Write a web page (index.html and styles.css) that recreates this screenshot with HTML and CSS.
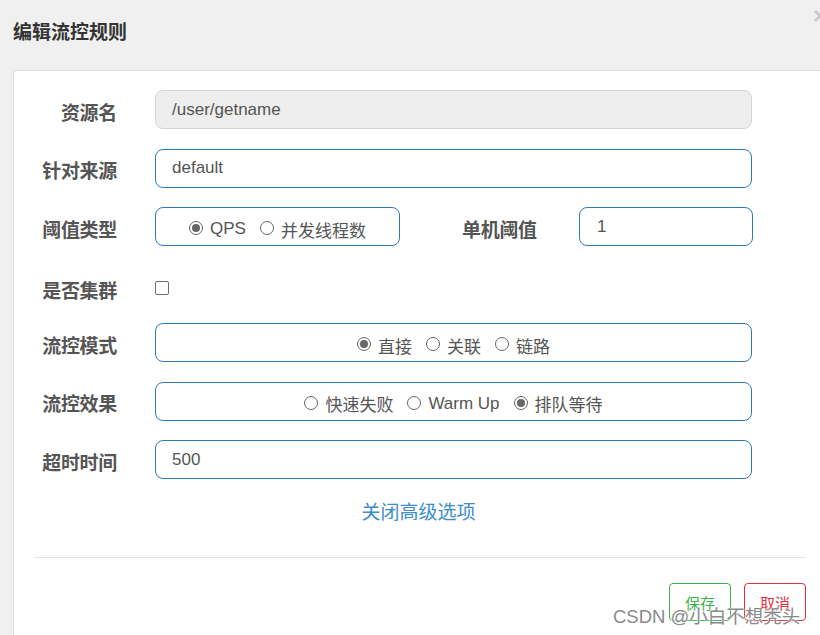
FILE: index.html
```html
<!DOCTYPE html>
<html lang="zh">
<head>
<meta charset="utf-8">
<title>编辑流控规则</title>
<link rel="stylesheet" href="styles.css">
</head>
<body>
<div class="modal">
  <div class="modal-header">
    <h4 class="modal-title">编辑流控规则</h4>
    <span class="close">×</span>
  </div>
  <div class="modal-body">
    <div class="form">
      <div class="row">
        <label class="label">资源名</label>
        <div class="input disabled">/user/getname</div>
      </div>
      <div class="row">
        <label class="label">针对来源</label>
        <div class="input">default</div>
      </div>
      <div class="row">
        <label class="label">阈值类型</label>
        <div class="radio-box short">
          <span class="radio checked"></span><span class="opt">QPS</span>
          <span class="radio"></span><span class="opt">并发线程数</span>
        </div>
        <label class="label inline">单机阈值</label>
        <div class="input narrow">1</div>
      </div>
      <div class="row check-row">
        <label class="label">是否集群</label>
        <span class="checkbox"></span>
      </div>
      <div class="row">
        <label class="label">流控模式</label>
        <div class="radio-box">
          <span class="radio checked"></span><span class="opt">直接</span>
          <span class="radio"></span><span class="opt">关联</span>
          <span class="radio"></span><span class="opt">链路</span>
        </div>
      </div>
      <div class="row">
        <label class="label">流控效果</label>
        <div class="radio-box">
          <span class="radio"></span><span class="opt">快速失败</span>
          <span class="radio"></span><span class="opt">Warm Up</span>
          <span class="radio checked"></span><span class="opt">排队等待</span>
        </div>
      </div>
      <div class="row">
        <label class="label">超时时间</label>
        <div class="input">500</div>
      </div>
    </div>
    <div class="link-row"><a class="link">关闭高级选项</a></div>
    <div class="divider"></div>
    <div class="footer">
      <button class="btn save">保存</button>
      <button class="btn cancel">取消</button>
    </div>
  </div>
  <div class="watermark">CSDN @小白不想秃头</div>
</div>
</body>
</html>
```

FILE: styles.css
```css
html, body {
  margin: 0;
  padding: 0;
  background: #f0f0f0;
  overflow: hidden;
  width: 820px;
  height: 635px;
}

body {
  font-family: "Liberation Sans", "Noto Sans CJK SC", sans-serif;
  color: #555;
}

.modal {
  position: relative;
  width: 820px;
  height: 635px;
  overflow: hidden;
}

.modal-header {
  position: relative;
  height: 70px;
  padding-left: 13px;
  display: flex;
  align-items: center;
}

.modal-title {
  margin: 0 0 10px 0;
  font-family: "Noto Sans CJK SC", sans-serif;
  font-size: 19px;
  font-weight: 700;
  color: #333;
}

.close {
  position: absolute;
  right: -7px;
  top: 2px;
  font-size: 24px;
  font-weight: 700;
  color: #c8c8c8;
  font-family: "Liberation Sans", sans-serif;
}

.modal-body {
  margin-left: 13px;
  width: 830px;
  background: #fff;
  border: 1px solid #dcdcdc;
  border-right: none;
  border-bottom: none;
  border-radius: 4px 0 0 0;
  padding-top: 19px;
  height: 600px;
  box-sizing: border-box;
}

.form {
  display: flex;
  flex-direction: column;
  gap: 19.5px;
}

.row {
  display: flex;
  align-items: center;
  height: 39px;
}

.label {
  width: 103px;
  margin-right: 38px;
  text-align: right;
  font-family: "Noto Sans CJK SC", sans-serif;
  font-size: 19px;
  font-weight: 700;
  color: #555;
  padding-top: 3px;
  letter-spacing: -0.3px;
}

.label.inline {
  width: 80px;
  margin-left: 62px;
  margin-right: 37px;
  text-align: left;
}

.input {
  width: 597px;
  height: 39px;
  box-sizing: border-box;
  border: 1px solid #3479b7;
  border-radius: 8px;
  padding-left: 16px;
  display: flex;
  align-items: center;
  font-size: 17px;
  color: #555;
  background: #fff;
}

.input.disabled {
  background: #eee;
  border-color: #d4d4d4;
}

.input.narrow {
  width: 174px;
  padding-left: 17px;
}

.check-row {
  height: 38px;
  padding-top: 6px;
  box-sizing: border-box;
}

.checkbox {
  width: 14px;
  height: 14px;
  box-sizing: border-box;
  border: 1px solid #6f6f6f;
  border-radius: 2px;
  margin-top: 1px;
}

.radio-box {
  width: 597px;
  height: 39px;
  box-sizing: border-box;
  border: 1px solid #3479b7;
  border-radius: 8px;
  display: flex;
  align-items: center;
  justify-content: center;
  padding-top: 5px;
  font-size: 17px;
  color: #555;
}

.radio-box.short {
  width: 245px;
}

.radio {
  width: 14px;
  height: 14px;
  box-sizing: border-box;
  border: 1px solid #666;
  border-radius: 50%;
  margin-right: 7px;
  margin-left: 14px;
  position: relative;
  margin-top: -2px;
}

.radio:first-child {
  margin-left: 0;
}

.radio.checked::after {
  content: "";
  position: absolute;
  left: 2px;
  top: 2px;
  width: 8px;
  height: 8px;
  border-radius: 50%;
  background: #666;
}

.opt {
  font-family: "Liberation Sans", "Noto Sans CJK SC", sans-serif;
}

.link-row {
  margin-top: 19px;
  height: 26px;
  display: flex;
  justify-content: center;
  padding-right: 20px;
}

.link {
  font-family: "Noto Sans CJK SC", sans-serif;
  font-size: 19px;
  color: #3d8dcc;
  line-height: 26px;
}

.divider {
  margin-top: 33px;
  margin-left: 20px;
  width: 772px;
  height: 1px;
  background: #e5e5e5;
}

.footer {
  margin-top: 25px;
  width: 792px;
  display: flex;
  justify-content: flex-end;
  gap: 13px;
}

.btn {
  width: 62px;
  height: 38px;
  background: #fff;
  border-radius: 4px;
  font-family: "Noto Sans CJK SC", sans-serif;
  font-size: 15px;
  padding: 0;
}

.btn.save {
  border: 1px solid #3cb34a;
  color: #3cb34a;
}

.btn.cancel {
  border: 1px solid #e0303e;
  color: #e0303e;
}

.watermark {
  position: absolute;
  left: 613px;
  top: 602px;
  font-family: "Liberation Sans", "Noto Sans CJK SC", sans-serif;
  font-size: 18.5px;
  color: #8a8a8a;
  white-space: nowrap;
  text-shadow: 0 0 2px #fff, 0 0 2px #fff;
}
```
